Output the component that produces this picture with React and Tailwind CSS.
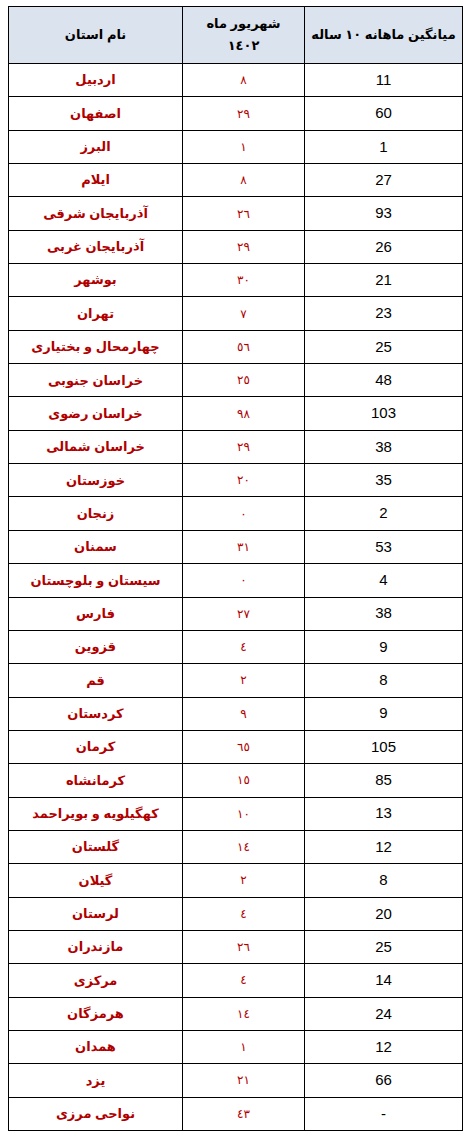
const rows = [
  ['اردبیل', '٨', '11'],
  ['اصفهان', '٢٩', '60'],
  ['البرز', '١', '1'],
  ['ایلام', '٨', '27'],
  ['آذربایجان شرقی', '٢٦', '93'],
  ['آذربایجان غربی', '٢٩', '26'],
  ['بوشهر', '٣٠', '21'],
  ['تهران', '٧', '23'],
  ['چهارمحال و بختیاری', '٥٦', '25'],
  ['خراسان جنوبی', '٢٥', '48'],
  ['خراسان رضوی', '٩٨', '103'],
  ['خراسان شمالی', '٢٩', '38'],
  ['خوزستان', '٢٠', '35'],
  ['زنجان', '٠', '2'],
  ['سمنان', '٣١', '53'],
  ['سیستان و بلوچستان', '٠', '4'],
  ['فارس', '٢٧', '38'],
  ['قزوین', '٤', '9'],
  ['قم', '٢', '8'],
  ['کردستان', '٩', '9'],
  ['کرمان', '٦٥', '105'],
  ['کرمانشاه', '١٥', '85'],
  ['کهگیلویه و بویراحمد', '١٠', '13'],
  ['گلستان', '١٤', '12'],
  ['گیلان', '٢', '8'],
  ['لرستان', '٤', '20'],
  ['مازندران', '٢٦', '25'],
  ['مرکزی', '٤', '14'],
  ['هرمزگان', '١٤', '24'],
  ['همدان', '١', '12'],
  ['یزد', '٢١', '66'],
  ['نواحی مرزی', '٤٣', '-'],
]

export default function App() {
  return (
    <div className="bg-white w-[473px] h-[1147px] pt-[6px] pl-[8px] font-['Liberation_Sans','DejaVu_Sans',sans-serif]">
      <table className="border-collapse border border-black table-fixed w-[454px]">
        <colgroup>
          <col className="w-[174px]" />
          <col className="w-[122px]" />
          <col className="w-[158px]" />
        </colgroup>
        <thead>
          <tr className="h-[57px] bg-[#dbe3ee]">
            <th dir="rtl" className="border border-black text-[13px] font-bold text-black text-center">نام استان</th>
            <th dir="rtl" className="border border-black text-[13px] font-bold text-black text-center leading-[22px]">
              شهریور ماه
              <br />
              ١٤٠٢
            </th>
            <th dir="rtl" className="border border-black text-[13px] font-bold text-black text-center">میانگین ماهانه ١٠ ساله</th>
          </tr>
        </thead>
        <tbody>
          {rows.map(([name, month, avg], i) => (
            <tr key={i} className="h-[33.35px]">
              <td dir="rtl" className="border border-black text-center text-[13px] font-bold text-[#b00000]">{name}</td>
              <td dir="rtl" className="border border-black text-center text-[12px] text-[#b00000]">{month}</td>
              <td className="border border-black text-center text-[15px] text-black">{avg}</td>
            </tr>
          ))}
        </tbody>
      </table>
    </div>
  )
}
